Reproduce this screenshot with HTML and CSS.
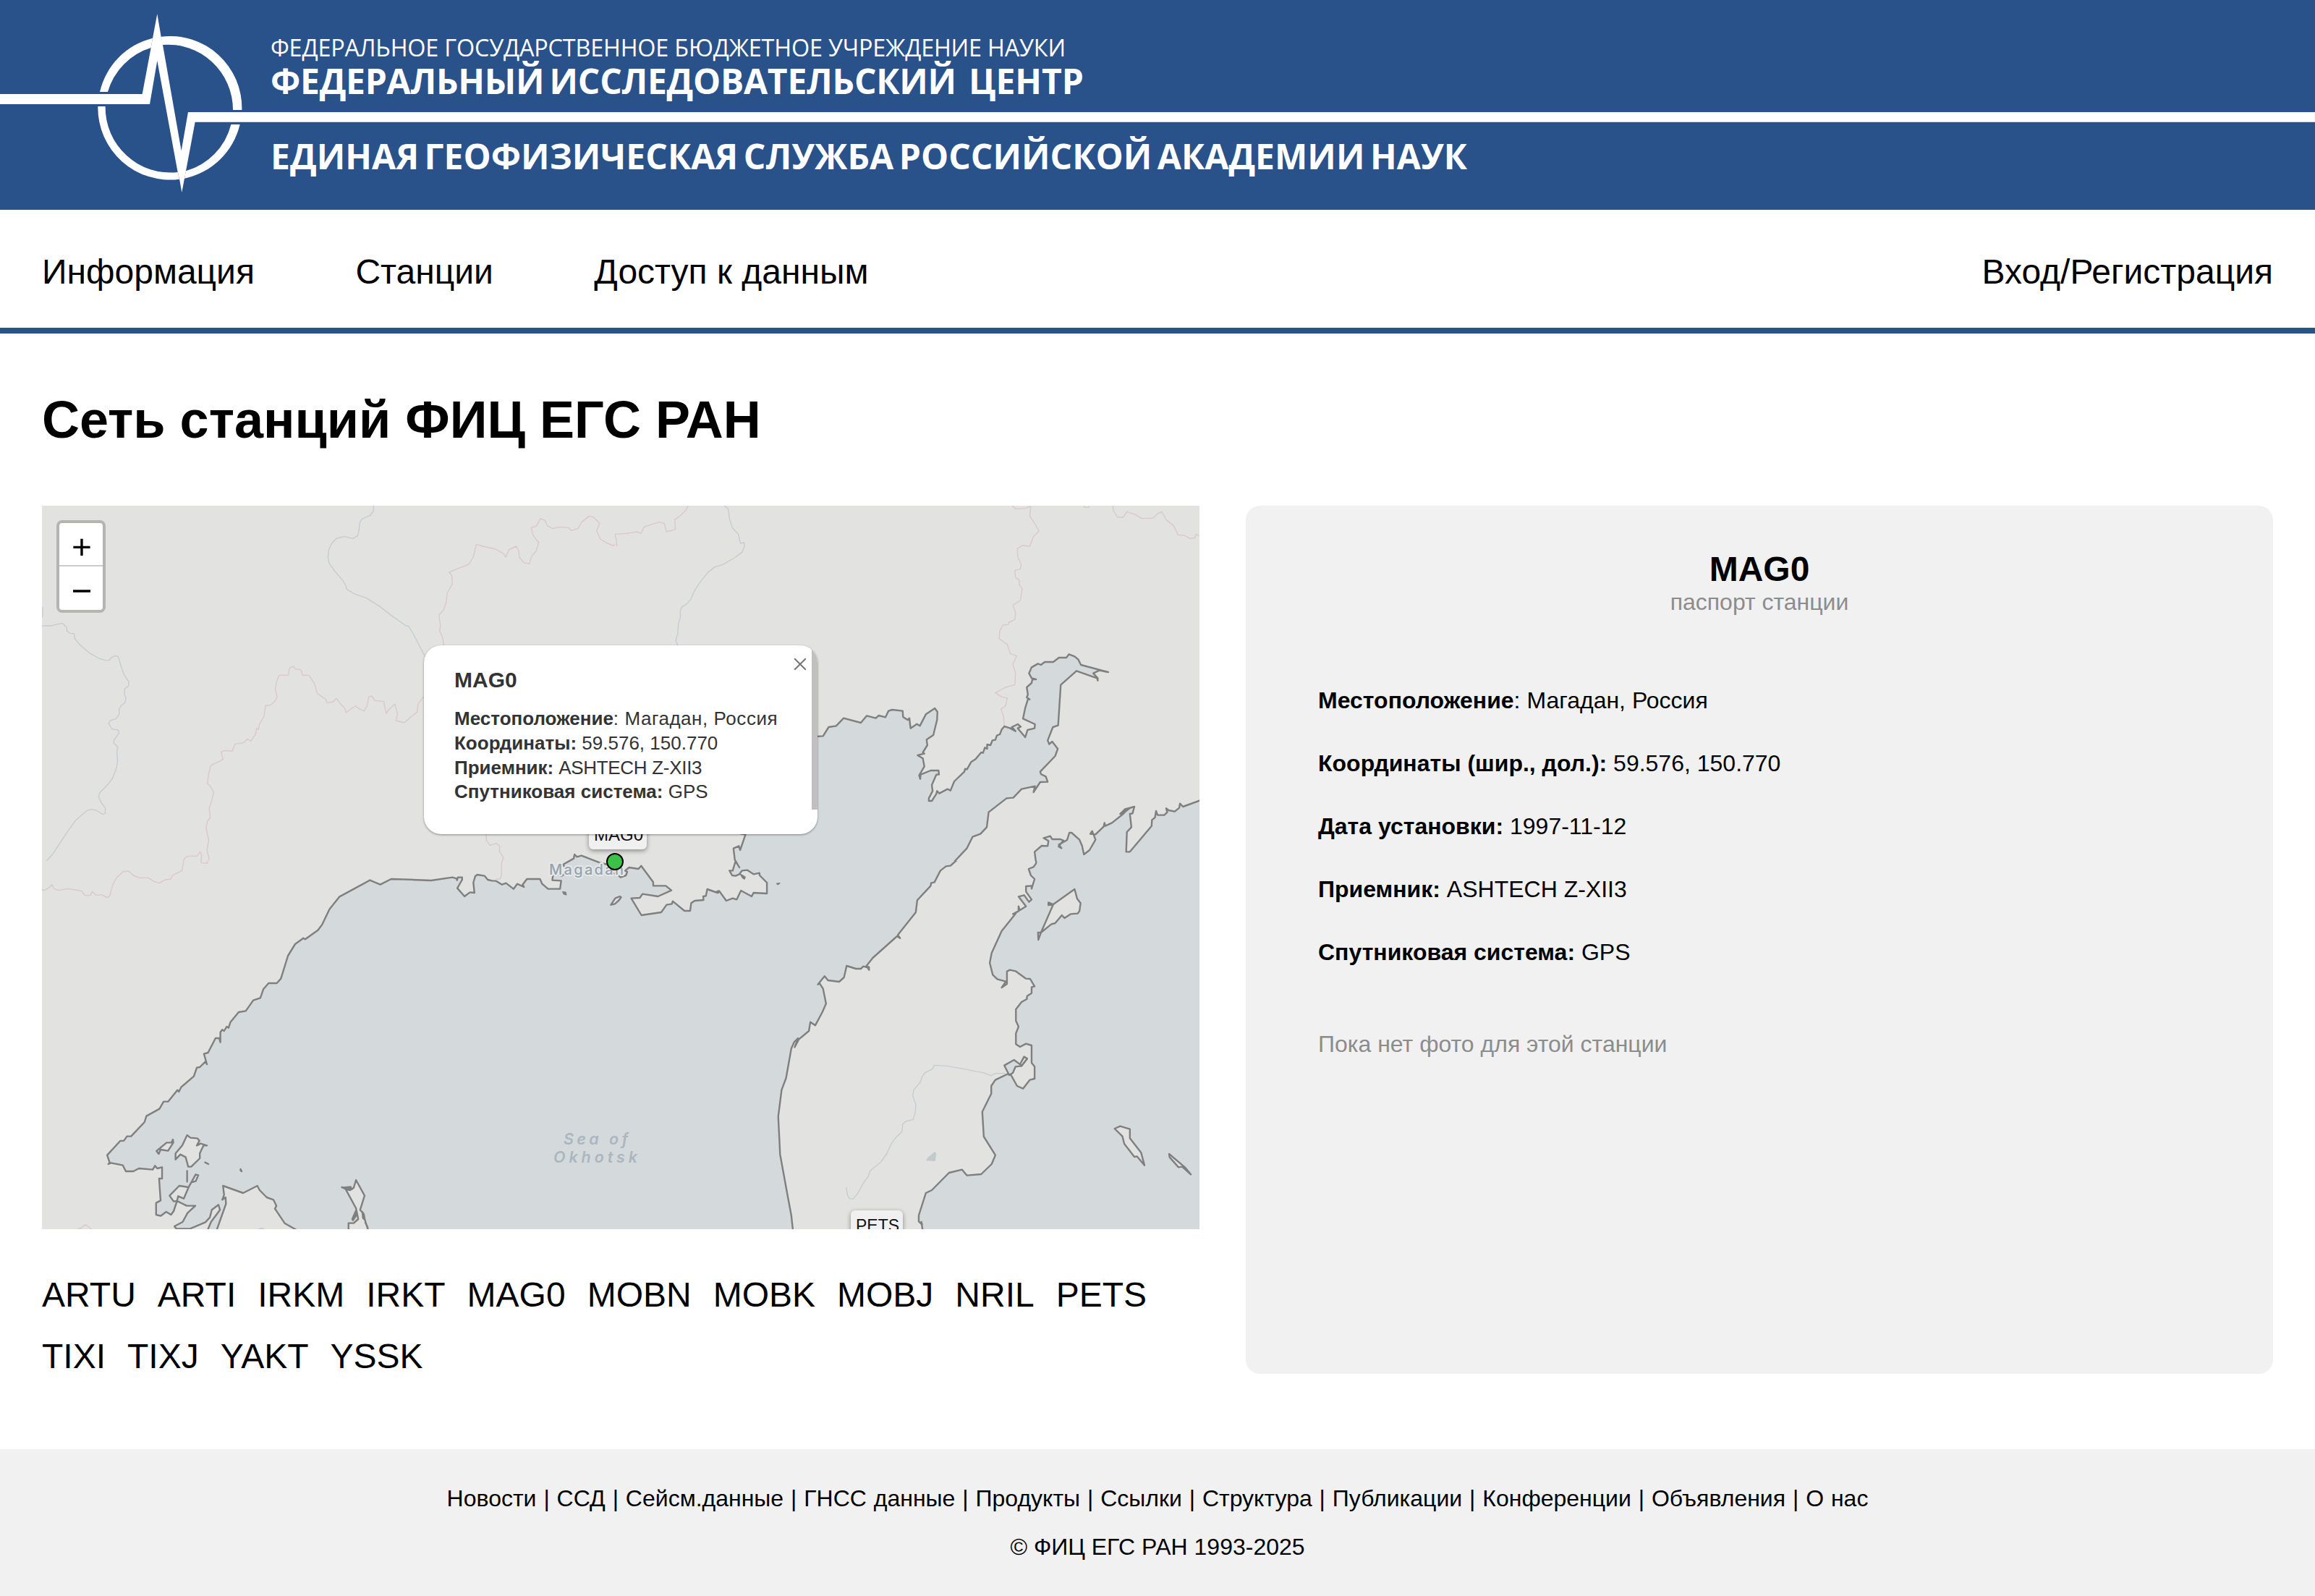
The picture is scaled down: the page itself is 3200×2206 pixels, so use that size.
FILE: index.html
```html
<!DOCTYPE html>
<html lang="ru">
<head>
<meta charset="utf-8">
<title>Сеть станций ФИЦ ЕГС РАН</title>
<link rel="stylesheet" href="styles.css">
</head>
<body>
<header class="banner">
  <svg class="banner-art" viewBox="0 0 3200 290">
    <g transform="translate(110 0) scale(.33333)" fill="#fff">
      <path d="M-330 390H260L296 198L303 158L322 58L338 152L345 186L422 625L450 465H9270V506H479L441 709L435 740L424 798L414 742L407 714L322 252L291 432H-330Z"/>
      <path d="M84 381A299 299 0 0 1 303 158L296 198A268 268 0 0 0 117 381Z"/>
      <path d="M338 152A298 298 0 0 1 673 456H636A270 270 0 0 0 343 186Z"/>
      <path d="M76 441A299 299 0 0 0 414 743L407 714A270 270 0 0 1 107 441Z"/>
      <path d="M665 516A300 300 0 0 1 435 740L441 709A268 268 0 0 0 628 516Z"/>
    </g>
    <g class="banner-text">
      <text class="banner-thin" x="374" y="78" textLength="1099">ФЕДЕРАЛЬНОЕ ГОСУДАРСТВЕННОЕ БЮДЖЕТНОЕ УЧРЕЖДЕНИЕ НАУКИ</text>
      <text class="banner-bold" x="374" y="130" textLength="948">ФЕДЕРАЛЬНЫЙ ИССЛЕДОВАТЕЛЬСКИЙ</text>
      <text class="banner-bold" x="1339" y="130" textLength="159">ЦЕНТР</text>
      <text class="banner-bold" x="374" y="234" textLength="1654">ЕДИНАЯ ГЕОФИЗИЧЕСКАЯ СЛУЖБА РОССИЙСКОЙ АКАДЕМИИ НАУК</text>
    </g>
  </svg>
</header>
<nav class="menu">
  <a>Информация</a><a>Станции</a><a>Доступ к данным</a><a class="login">Вход/Регистрация</a>
</nav>
<main>
  <h1>Сеть станций ФИЦ ЕГС РАН</h1>
  <div class="columns">
    <div class="left">
      <div class="map">
        <svg class="tiles" viewBox="58 699 1600 1000">
          <svg x="50" y="690" width="800" height="500" viewBox="0 0 1549 1500" preserveAspectRatio="none">
            <path class="river" d="M903 27V48L895 66 872 82 866 98 864 130 860 152 848 163 825 155 804 162 790 185 783 210 781 240 784 265 800 300 820 335 828 357 831 373 850 391 884 410 920 445 955 487 990 525 997 527 1008 555 1040 650M17 448L18 475 15 492M15 525H38L70 514 82 532 82 545 90 556 101 557 104 580 118 605 142 637 168 660 185 668 196 667 203 655 212 649 219 652 223 670 229 702 236 730 248 757 247 774 237 787 236 805 240 825 238 843 228 855 222 870 222 893 214 910 198 918 194 930 203 953 219 957 222 968 208 1000 208 1012 218 1027 216 1055 218 1085 215 1113 205 1155 192 1183 170 1217 167 1235 175 1260 185 1280 185 1303 178 1306 160 1290 148 1286 135 1292 105 1333 80 1387 45 1470 22 1510 15 1511"/>
            <path class="border" d="M390 1530L390 1515 397 1490 406 1480 430 1480 438 1463 443 1475 441 1505 458 1510 463 1490 457 1455 462 1415 455 1365 458 1335 466 1320 463 1280 470 1250 475 1215 466 1190 458 1178 463 1130 467 1105 490 1087 500 1078 495 1048 505 1042 525 1045 532 1015 555 1010 565 995 575 1002 587 975 590 950 595 955 597 935 610 900 614 855 625 855 638 840 645 820 640 790 643 760 650 730 675 730 678 700 688 693 695 706 704 704 710 712 713 730 730 730 745 765 752 805 775 830 778 845 795 840 804 826 815 850 825 865 830 885 842 870 855 858 865 870 878 878 886 855 890 820 898 816 907 835 930 838 937 888 945 870 960 850 967 890 963 918 985 927 1005 900 1020 882 1022 850 1038 818M1091 606L1088 575 1080 545 1082 525 1078 480 1090 460 1097 430 1100 390 1114 350 1112 315 1105 303 1125 290 1158 270 1170 240 1178 187 1195 195 1230 207 1250 225 1257 240 1265 210 1285 195 1292 215 1293 240 1305 263 1320 268 1325 240 1338 215 1345 180 1330 150 1325 118 1338 112 1350 80 1362 88 1368 110 1382 122 1400 115 1425 118 1432 130 1450 122 1460 95 1480 70 1492 75 1508 100 1500 130 1510 165 1525 180 1545 193 1553 180 1550 145 1568 148"/>
          </svg>
          <svg x="850" y="690" width="810" height="500" viewBox="0 0 1568 1500" preserveAspectRatio="none">
            <path class="river" d="M293 27L303 40 307 85 315 120 330 145 336 183 346 180 346 200 340 220 320 243 288 272 268 280 248 305 228 343 212 382 203 415 193 434 180 445 175 460 175 490 170 515 168 558 163 585 168 606"/>
            <path class="border" d="M196 27L190 45 175 68 160 85 162 125 150 130 138 135 132 100 120 95 100 103 78 115 70 142 60 135 30 142 0 145 4 170 5 195M1063 27L1072 40 1098 38 1113 30 1110 70 1122 98 1135 132 1120 155 1110 195 1090 192 1077 205 1078 240 1087 270 1085 290 1070 295 1072 325 1082 335 1082 355 1090 370 1085 420 1065 440 1072 470 1070 500 1055 510 1052 520 1038 522 1030 545 1028 578 1050 603 1058 640 1075 650 1065 685 1072 720 1070 770 1045 780 1018 803 1035 820 1050 825 1045 858 1033 870 1040 900 1042 942M1255 27L1257 34 1268 34 1269 27M1333 27V45L1345 75 1360 75 1370 52 1390 62 1410 80 1440 78 1452 60 1463 52 1475 85 1495 110 1507 148 1525 150 1538 163 1552 160 1555 145 1564 152"/>
            <path class="sea" d="M500 984L540 984 557 982 572 945 592 940 612 908 658 927 674 898 698 908 706 897 724 904 732 878 742 873 770 878 771 903 783 915 788 908 791 950 808 932 816 940 832 892 856 867 863 882 862 915 852 978 834 997 836 1020 824 1050 828 1055 810 1062 824 1075 828 1108 814 1145 817 1160 818 1142 845 1125 866 1125 867 1142 860 1142 848 1185 850 1210 840 1240 840 1251 848 1251 860 1222 862 1210 868 1220 890 1202 898 1208 908 1170 935 1130 937 1118 942 1120 953 1090 965 1078 980 1050 985 1052 990 1030 996 1035 996 1017 1005 1020 1010 1000 1018 998 1022 980 1030 975 1035 955 1042 942 1058 950 1072 962 1062 945 1078 933 1086 943 1078 950 1098 987 1104 957 1123 950 1124 933 1092 910 1098 865 1105 830 1110 830 1102 822 1105 810 1102 780 1115 762 1117 747 1127 747 1115 742 1108 722 1115 697 1132 682 1140 687 1150 675 1173 675 1188 657 1208 657 1215 643 1230 652 1240 665 1247 687 1320 717 1296 710 1280 722 1292 742 1292 752 1290 742 1235 712 1193 770 1186 938 1172 945 1158 1000 1162 1016 1170 1005 1185 1035 1178 1065 1138 1130 1140 1140 1153 1150 1158 1172 1138 1173 1120 1215 1124 1190 1088 1202 1066 1238 1048 1240 1000 1298 995 1360 978 1388 957 1400 942 1447 898 1520 885 1522 870 1545 325 1545 322 1500 318 1445 335 1438 338 1453 348 1390 340 1300Z"/>
            <path class="sea" d="M1620 1225L1564 1250 1520 1275 1512 1262 1510 1280 1498 1295 1482 1290 1475 1282 1478 1298 1470 1310 1452 1310 1448 1293 1445 1320 1437 1330 1436 1355 1378 1462 1368 1462 1370 1380 1382 1360 1378 1305 1385 1303 1390 1275 1365 1285 1352 1305 1360 1303 1370 1287 1360 1305 1330 1342 1312 1355 1310 1342 1308 1357 1286 1390 1272 1388 1277 1376 1286 1412 1270 1455 1255 1473 1250 1437 1243 1412 1222 1383 1216 1383 1210 1413 1188 1432 1195 1447 1187 1440 1200 1415 1192 1410 1170 1410 1165 1397 1147 1405 1160 1417 1158 1438 1142 1437 1123 1462 1127 1510 1110 1530 1100 1560 1620 1560Z"/>
            <path class="rocks" d="M1352 1305L1366 1286 1380 1280 1360 1304Z"/>
          </svg>
          <svg x="50" y="1190" width="800" height="520" viewBox="0 0 1549 1560" preserveAspectRatio="none">
            <path class="border" d="M395 0L390 40 365 60 360 75 345 78 330 92 315 85 300 70 275 70 260 60 248 42 232 45 215 70 205 98 197 145 190 152 175 140 160 142 150 127 145 143 130 143 122 125 105 120 85 115 60 122 48 115 42 98 35 110 22 122 15 118M441 0L443 8 458 10 458 0M110 1527L120 1522 132 1508 148 1527"/>
            <path class="sea" d="M1700 60L1380 80 1405 82 1402 117 1370 117 1355 100 1347 75 1312 75 1303 108 1290 98 1278 117 1262 95 1248 98 1230 80 1215 85 1200 65 1182 58 1172 75 1172 132 1160 132 1146 147 1128 110 1140 75 1128 75 1126 80 1115 70 1060 80 950 75 921 98 893 80 812 148 785 200 765 265 754 287 720 325 715 320 693 345 674 393 655 488 644 507 622 507 608 532 600 568 581 578 561 622 542 627 520 668 515 692 510 687 503 705 498 700 493 710 493 752 490 735 480 735 460 795 449 800 457 843 453 832 438 855 430 857 422 893 388 938 382 957 378 950 353 998 341 998 330 1028 295 1058 290 1083 254 1142 243 1142 235 1160 225 1161 190 1220 197 1252 193 1257 200 1252 232 1262 240 1287 260 1287 275 1275 312 1280 318 1264 324 1275 337 1270 337 1317 329 1317 333 1408 321 1418 321 1467 333 1472 348 1455 361 1467 368 1452 377 1410 403 1430 426 1430 405 1460 392 1497 370 1515 375 1525 412 1525 453 1498 465 1478 470 1447 488 1426 492 1447 468 1497 460 1527 460 1580 484 1580 484 1527 508 1422 507 1395 498 1405 503 1385 500 1347 554 1377 592 1347 598 1365 617 1395 635 1405 643 1430 639 1442 665 1502 693 1527 740 1580 836 1580 836 1502 850 1502 862 1485 856 1440 828 1360 818 1353 840 1365 850 1355 856 1323 879 1388 867 1447 875 1460 882 1500 888 1527 890 1580 1700 1580Z"/>
            <path class="land" d="M322 1203L349 1168 362 1168 366 1155 367 1168 353 1202 333 1197 328 1215ZM404 1137L413 1148 431 1150 437 1160 430 1180 440 1172 457 1180 448 1180 438 1212 438 1233 415 1268 407 1268 400 1228 386 1217 373 1238 373 1213 391 1180ZM452 1250L461 1257ZM547 1278L550 1287 547 1284ZM404 1285V1330ZM408 1353L427 1300 434 1303 427 1328 415 1333ZM357 1388L383 1347 408 1353 395 1400 380 1390 377 1410 368 1412Z"/>
            <path class="rocks" d="M855 1450L860 1465 848 1492 845 1485ZM872 1455L878 1465 880 1490 874 1482ZM880 1500L888 1518ZM820 1354L842 1350 846 1362 838 1366Z"/>
            <path class="lake" d="M590 1527L604 1520 613 1527Z"/>
          </svg>
          <svg x="850" y="1190" width="810" height="520" viewBox="0 0 1568 1560" preserveAspectRatio="none">
            <rect class="water" width="1568" height="1560"/>
            <path class="land" d="M940 -20L912 0 898 20 886 22 871 40 855 88 846 92 845 103 809 163 805 213 757 307 763 320 755 312 690 402 672 437 680 440 680 452 676 442 665 437 658 447 645 447 620 435 613 483 600 501 570 495 561 478 543 512 548 508 557 530 565 592 555 627 536 682 523 668 519 705 492 740 481 772 490 735 480 750 472 778 458 900 446 950 437 1060 442 1217 460 1370 472 1470 476 1527 476 1590 823 1590 823 1527 820 1497 822 1508 813 1495 813 1470 832 1377 848 1365 894 1293 929 1280 942 1304 980 1299 1008 1257 1018 1220 987 1143 983 1040 1007 965 1007 933 1018 908 1053 882 1060 888 1076 933 1092 944 1110 908 1123 903 1123 853 1115 837 1115 765 1100 758 1084 771 1073 760 1073 715 1080 687 1073 663 1073 615 1088 585 1102 573 1103 560 1115 548 1115 523 1123 520 1111 489 1100 488 1072 457 1057 452 1049 458 1049 510 1035 525 1046 500 1023 490 1011 472 1003 423 1008 382 1035 290 1073 217 1065 220 1080 208 1080 188 1083 205 1100 188 1080 148 1095 142 1108 170 1115 160 1100 127 1100 105 1115 103 1115 115 1123 75 1113 60 1107 33 1120 25 1127 10 1127 -20Z"/>
            <path class="sea" d="M1042 848L1068 825 1085 845 1095 812 1103 820 1088 850 1072 853 1065 878 1055 888Z"/>
            <path class="land" d="M1095 812L1103 820 1088 850 1084 843ZM1230 117L1237 157 1246 175 1243 208 1238 218 1220 220 1203 237 1196 225 1178 258 1168 262 1140 297 1173 180 1160 183 1160 172 1173 180ZM1132 297L1140 297 1133 327ZM1337 1110L1352 1100 1378 1112 1378 1150 1408 1210 1417 1262 1397 1225 1390 1227 1363 1173 1358 1142ZM1483 1215L1525 1270 1541 1300 1518 1268 1508 1270 1484 1228Z"/>
            <path class="river" d="M1045 881H1018L1007 890 985 878 890 850 855 847 850 862 830 878 822 895 817 918 800 948 797 975 805 1010 804 1040 798 1072 778 1080 770 1092 768 1122 750 1150 740 1172 727 1215 712 1248 683 1285 678 1308 665 1335 650 1378 637 1402 628 1400 622 1385 619 1353"/>
            <path class="lake" d="M832 1243L837 1230 856 1205 860 1215 857 1245Z"/>
          </svg>
          <svg x="570" y="1150" width="580" height="130" viewBox="0 810 1568 390" preserveAspectRatio="none">
            <rect class="ground" y="810" width="1568" height="390"/>
            <path class="border" d="M275 810L277 845 290 865 315 857 327 870 325 890 340 915 333 940 333 990 328 1005 313 1005"/>
            <path class="sea" d="M-30 1007L70 1011 150 998 165 1003 167 1010 170 998 186 998 186 1008 168 1043 195 1077 215 1060 232 1062 228 1020 235 993 243 987 270 992 282 1008 298 1012 313 1013 335 1028 350 1022 378 1046 392 1025 417 1038 412 1028 428 1005 477 1005 485 1025 507 1046 552 1046 556 1012 523 1010 525 993 545 962 540 985 558 992 570 983 585 980 563 945 603 920 606 903 615 913 632 908 700 937 730 945 760 950 745 980 765 985 778 998 798 990 803 975 795 970 810 957 845 963 855 950 900 1018 900 1033 947 1033 968 1052 918 1077 860 1067 850 1083 818 1085 856 1155 930 1143 950 1112 970 1108 973 1097 1017 1137 1038 1137 1042 1105 1055 1095 1088 1092 1087 1077 1097 1075 1102 1047 1140 1062 1147 1055 1173 1095 1197 1085 1212 1090 1228 1053 1268 1077 1275 1062 1325 1065 1325 1020 1298 990 1297 980 1275 985 1252 968 1232 970 1222 985 1208 992 1195 990 1185 970 1197 970 1208 930 1222 957 1205 925 1200 878 1220 868 1225 885 1245 820 1228 818 1240 760 1640 760 1640 1260 -30 1260Z"/>
            <path class="land" d="M775 1077L780 1080 773 1092 757 1108 742 1112 758 1085Z"/>
            <path class="rocks" d="M562 1058L573 1060 575 1070 566 1067ZM1362 1024L1373 1022 1366 1028ZM1226 985L1234 990 1244 997 1241 1005 1234 1000ZM1133 1058L1145 1053 1144 1063Z"/>
          </svg>
          <g class="sea-label"><text x="779" y="1581.500" textLength="89">Sea of</text><text x="765" y="1606.500" textLength="116">Okhotsk</text></g>
          <text class="town" x="759" y="1208.500" textLength="103">Magadan</text>
        </svg>
        <span class="tip tip-mag">MAG0</span>
        <span class="tip tip-pets">PETS</span>
        <i class="marker"></i>
        <div class="popup">
          <h3>MAG0</h3>
          <p class="place"><b>Местоположение</b>: Магадан, Россия</p>
          <p><b>Координаты:</b> 59.576, 150.770</p>
          <p class="receiver"><b>Приемник:</b> ASHTECH Z-XII3</p>
          <p><b>Спутниковая система:</b> GPS</p>
          <i class="scroll"></i>
          <svg class="close" viewBox="0 0 18 18"><path d="M1.200 1.200L16.800 16.800M16.800 1.200L1.200 16.800"/></svg>
        </div>
        <div class="zoom">
          <svg viewBox="0 0 60 60"><path d="M19 34.500H43M31 22.500V46.500"/></svg>
          <svg viewBox="0 0 60 60"><path d="M19 34H43"/></svg>
        </div>
      </div>
      <div class="stations"><a>ARTU</a><a>ARTI</a><a>IRKM</a><a>IRKT</a><a>MAG0</a><a>MOBN</a><a>MOBK</a><a>MOBJ</a><a>NRIL</a><a>PETS</a><a>TIXI</a><a>TIXJ</a><a>YAKT</a><a>YSSK</a></div>
    </div>
    <section class="passport">
      <h2>MAG0</h2>
      <div class="sub">паспорт станции</div>
      <p><b>Местоположение</b>: Магадан, Россия</p>
      <p><b>Координаты (шир., дол.):</b> 59.576, 150.770</p>
      <p><b>Дата установки:</b> 1997-11-12</p>
      <p><b>Приемник:</b> ASHTECH Z-XII3</p>
      <p><b>Спутниковая система:</b> GPS</p>
      <div class="nophoto">Пока нет фото для этой станции</div>
    </section>
  </div>
</main>
<footer>
  <div class="links">Новости | ССД | Сейсм.данные | ГНСС данные | Продукты | Ссылки | Структура | Публикации | Конференции | Объявления | О нас</div>
  <div>© ФИЦ ЕГС РАН 1993-2025</div>
</footer>
</body>
</html>
```
FILE: styles.css
```css
* { box-sizing: border-box; }
body {
  margin: 0;
  height: 2206px;
  display: flex;
  flex-direction: column;
  background: #fff;
  color: #000;
  font-family: "Liberation Sans", Arial, sans-serif;
  font-size: 32px;
}
h1, h2, h3, p { margin: 0; }

.banner { height: 290px; background: #29528b; }
.banner-art { display: block; width: 3200px; height: 290px; }
.banner-text { fill: #fff; font-family: "Open Sans", "Noto Sans", sans-serif; }
.banner-thin { font-size: 32.400px; }
.banner-bold { font-size: 48px; font-weight: 700; word-spacing: -5px; }

.menu {
  height: 171px;
  padding: 58px 58px 0;
  border-bottom: 8px solid #29528b;
  display: flex;
  gap: 139.500px;
  font-size: 48px;
  line-height: 56px;
}
.login { margin-left: auto; }

main { padding: 77px 58px 0; flex: 1; }
h1 { font-size: 72px; line-height: 84px; margin-bottom: 77px; }
.columns { display: grid; grid-template-columns: 1600px 1420px; gap: 64px; }

.map { position: relative; width: 1600px; height: 1000px; overflow: hidden; background: #e2e2e0; }
.tiles { display: block; width: 1600px; height: 1000px; }
.sea, .land, .river, .border, .rocks { vector-effect: non-scaling-stroke; stroke-linejoin: round; }
.sea { fill: #d4dadc; stroke: #7f7f7f; stroke-width: 2.400px; }
.land { fill: #e2e2e0; stroke: #7f7f7f; stroke-width: 2.400px; }
.rocks { fill: #7f7f7f; stroke: #7f7f7f; stroke-width: 1.500px; }
.water { fill: #d4dadc; }
.ground { fill: #e2e2e0; }
.lake { fill: #c3cacc; }
.river { fill: none; stroke: #c5cdd1; stroke-width: 1.400px; }
.border { fill: none; stroke: #dbc8ca; stroke-width: 1.400px; }
.sea-label { font: italic 600 21.500px Inter, sans-serif; fill: #abb6bf; }
.town {
  font: 500 20px Inter, sans-serif;
  fill: #94a2b0;
  stroke: #e6e8e8;
  stroke-width: 4px;
  stroke-linejoin: round;
  paint-order: stroke;
}

.tip {
  position: absolute;
  height: 41px;
  padding: 0 7px;
  border-radius: 6px;
  background: #f0f0f0;
  box-shadow: 0 2px 6px rgba(0, 0, 0, .4);
  color: #111;
  font-size: 24px;
  line-height: 42px;
}
.tip-mag { left: 756px; top: 434px; width: 80px; }
.tip-pets { left: 1118px; top: 974px; width: 72px; font-size: 23px; }
.marker {
  position: absolute;
  left: 780px;
  top: 480px;
  width: 24px;
  height: 24px;
  border: 2px solid #000;
  border-radius: 50%;
  background: #3bc148;
}

.popup {
  position: absolute;
  left: 528px;
  top: 193px;
  width: 544px;
  height: 261px;
  padding: 31px 0 0 42px;
  overflow: hidden;
  border-radius: 24px;
  background: #fff;
  box-shadow: 0 1px 3px rgba(0, 0, 0, .4);
  color: #333;
  font-size: 26px;
  line-height: 33.800px;
}
.popup h3 { font-size: 30px; line-height: 34px; margin-bottom: 20px; }
.popup p { white-space: nowrap; }
.popup .place { letter-spacing: .55px; }
.popup .place b { letter-spacing: 0; }
.popup .receiver { letter-spacing: -.3px; }
.popup .receiver b { letter-spacing: 0; }
.scroll { position: absolute; right: 0; top: 0; width: 8px; height: 227px; background: #c0c0c0; }
.close { position: absolute; left: 511px; top: 17px; width: 18px; height: 18px; stroke: #757575; stroke-width: 2; }

.zoom {
  position: absolute;
  left: 20px;
  top: 20px;
  width: 68px;
  height: 128px;
  border: 4px solid rgba(0, 0, 0, .2);
  border-radius: 8px;
  background: #fff;
  background-clip: padding-box;
}
.zoom svg { display: block; width: 60px; height: 60px; stroke: #000; stroke-width: 3.500; }
.zoom svg:first-child { border-bottom: 2px solid #ccc; }

.stations {
  margin-top: 48px;
  display: flex;
  flex-wrap: wrap;
  column-gap: 30px;
  font-size: 48px;
  line-height: 85px;
}

.passport {
  height: 1200px;
  padding: 60px 100px 0;
  border-radius: 20px;
  background: #f1f1f1;
}
h2 { font-size: 48px; line-height: 56px; text-align: center; }
.sub { margin: -3px 0 98px; text-align: center; color: #8c8c8c; line-height: 40px; }
.passport p { line-height: 37px; margin-bottom: 50px; }
.nophoto { margin-top: 90px; line-height: 37px; color: #8c8c8c; }

footer {
  height: 203px;
  padding-top: 35px;
  background: #f1f1f1;
  text-align: center;
  line-height: 67px;
}
.links { word-spacing: 1px; }
```
